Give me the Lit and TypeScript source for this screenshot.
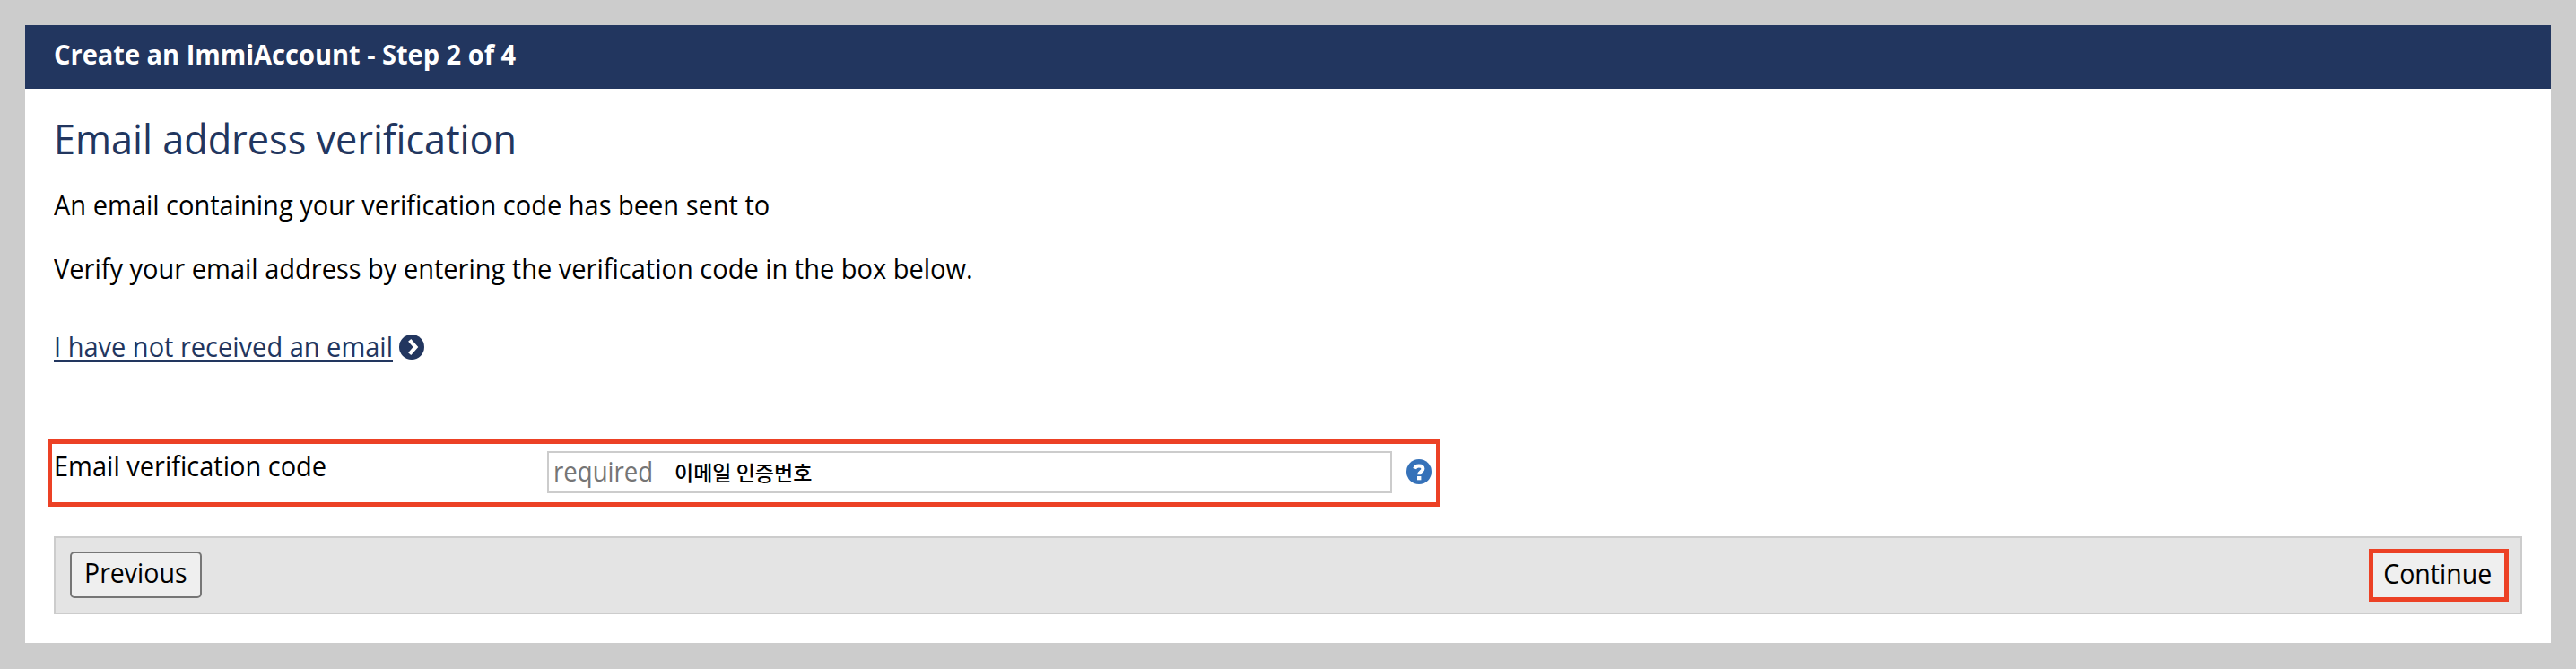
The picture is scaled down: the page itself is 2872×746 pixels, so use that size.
import { LitElement, html, css } from "lit";
import { customElement } from "lit/decorators.js";

@customElement("app-root")
export class AppRoot extends LitElement {
  static override styles = css`
    :host {
      display: block;
      box-sizing: border-box;
      height: 746px;
      padding: 28px 28px 29px;
      background: #ccc;
      color: #000;
      font-family: "Open Sans", "Noto Sans CJK KR", sans-serif;
      font-size: 30.5px;
      line-height: 40px;
    }
    * {
      box-sizing: border-box;
    }
    .panel {
      height: 689px;
      background: #fff;
    }
    .header {
      height: 71px;
      padding: 12px 32px 0;
      background: #22365f;
      color: #fff;
      font-weight: 700;
    }
    /* slightly condensed lettering */
    .narrow {
      display: inline-block;
      transform: scaleX(0.951);
      transform-origin: 0 50%;
      white-space: nowrap;
    }
    .content {
      display: flex;
      flex-direction: column;
      align-items: flex-start;
      padding: 25px 32px 0;
    }
    h1 {
      margin: 0 0 24px;
      color: #22365f;
      font-size: 46px;
      font-weight: 400;
      line-height: 60px;
    }
    h1.narrow {
      transform: scaleX(0.94);
    }
    p {
      margin: 0 0 31px;
    }
    .resend {
      display: flex;
      align-items: center;
      gap: 8px;
      margin-top: 16px;
      color: #22365f;
    }
    .resend a {
      margin-right: -20px;
      color: inherit;
      text-decoration: underline;
      text-decoration-thickness: 3px;
      text-underline-offset: 3px;
      text-decoration-skip-ink: none;
    }
    .icon {
      display: block;
      width: 28px;
      height: 28px;
    }
    .resend .icon {
      margin-top: 2px;
    }
    .field {
      display: flex;
      align-items: flex-start;
      width: 1553px;
      height: 75px;
      margin: 84px 0 33px -7px;
      padding: 4px 0 0 2px;
      border: 5px solid #ec4125;
    }
    .field label {
      width: 550px;
    }
    .input {
      display: flex;
      width: 942px;
      height: 47px;
      margin-top: 4px;
      padding: 0 5px;
      border: 2px solid #ccc;
      background: #fff;
    }
    .placeholder {
      width: 135px;
      color: #757575;
    }
    .placeholder.narrow {
      transform: scaleX(0.905);
    }
    .hint {
      padding-top: 1px;
      font-family: "Noto Sans CJK KR", sans-serif;
      font-size: 23px;
      font-weight: 500;
    }
    .field .icon {
      margin: 13px 0 0 16px;
    }
    .actions {
      display: flex;
      align-self: stretch;
      justify-content: space-between;
      height: 87px;
      padding: 12px 13px 0 16px;
      border: 2px solid #ccc;
      background: #e4e4e4;
    }
    button {
      padding: 0;
      border: 2px solid #767676;
      border-radius: 5px;
      background: #efefef;
      color: #000;
      font: inherit;
    }
    button .narrow {
      transform: scaleX(0.935);
      transform-origin: 50% 50%;
    }
    .previous {
      width: 147px;
      height: 52px;
      margin-top: 3px;
      padding-bottom: 6px;
    }
    .continue {
      width: 156px;
      height: 59px;
      padding: 0 2px 5px 0;
      border: 5px solid #ec4125;
      border-radius: 0;
    }
  `;

  override render() {
    return html`
      <main class="panel">
        <div class="header"><span class="narrow">Create an ImmiAccount - Step 2 of 4</span></div>
        <div class="content">
          <h1 class="narrow">Email address verification</h1>
          <p class="narrow">An email containing your verification code has been sent to</p>
          <p class="narrow">
            Verify your email address by entering the verification code in the box below.
          </p>
          <div class="resend">
            <a class="narrow">I have not received an email</a>
            <svg class="icon" viewBox="0 0 28 28">
              <circle cx="14" cy="14" r="14" fill="#22365f" />
              <path d="M11.7 6.3l6.8 7.7-6.8 7.7" fill="none" stroke="#fff" stroke-width="4.2" />
            </svg>
          </div>
          <div class="field">
            <label><span class="narrow">Email verification code</span></label>
            <div class="input">
              <span class="placeholder narrow">required</span>
              <span class="hint">이메일 인증번호</span>
            </div>
            <svg class="icon" viewBox="0 0 28 28">
              <circle cx="14" cy="14" r="14" fill="#3672b9" />
              <path
                d="M9.2 10.6c.6-2 2.2-3.1 4.6-3.1 2.8 0 4.6 1.2 4.6 3.2 0 3.2-4.2 3-4.2 6.6"
                fill="none"
                stroke="#fff"
                stroke-width="4"
              />
              <path d="M12 19h4.4v4.3H12z" fill="#fff" />
            </svg>
          </div>
          <div class="actions">
            <button class="previous"><span class="narrow">Previous</span></button>
            <button class="continue"><span class="narrow">Continue</span></button>
          </div>
        </div>
      </main>
    `;
  }
}

declare global {
  interface HTMLElementTagNameMap {
    "app-root": AppRoot;
  }
}
